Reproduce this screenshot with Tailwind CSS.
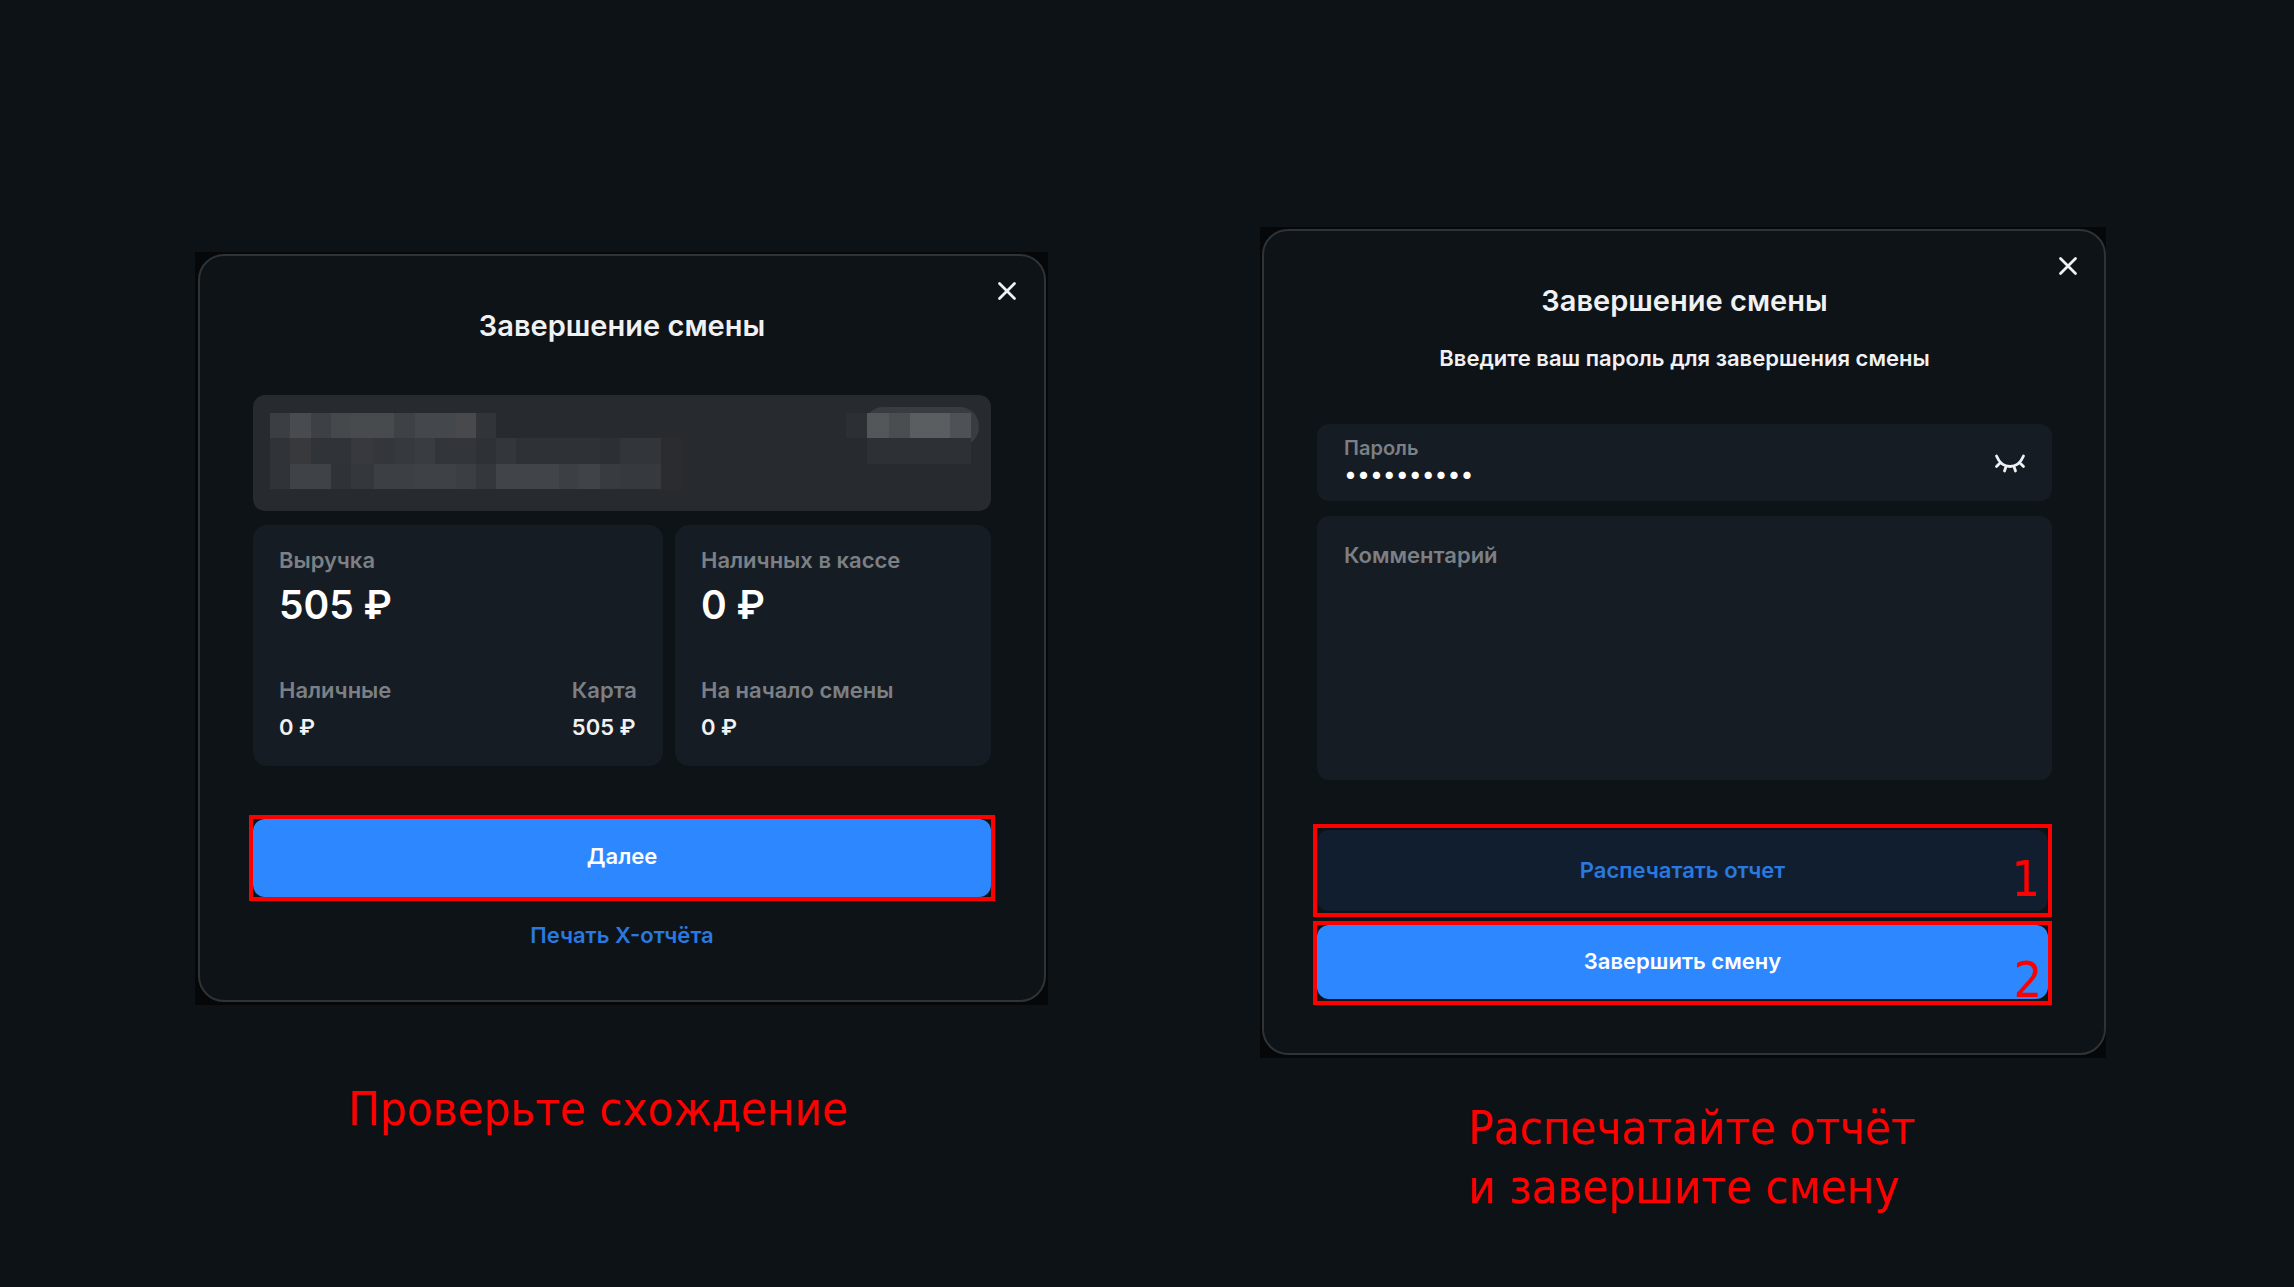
<!DOCTYPE html>
<html lang="ru">
<head>
    <meta charset="UTF-8">
    <meta name="viewport" content="width=device-width, initial-scale=1.0">
    <title>Завершение смены</title>
    <script src="https://cdn.jsdelivr.net/npm/@tailwindcss/browser@4"></script>
</head>
<body class="min-h-screen bg-[#0d1216] font-['Inter',sans-serif] text-[#f0f1f2] antialiased">

    <main class="grid grid-cols-[853fr_846fr] items-start gap-x-[212px] pt-[227px] pr-[188px] pl-[195px]">

        <!-- Step 1: totals -->
        <section class="mt-[25px]">
            <div class="bg-[#050709] pt-[2px] pr-[2px] pb-[3px] pl-[3px]">
                <div class="relative rounded-[26px] border-2 border-[#2f3336] bg-[#0e1317] px-[53px] pt-[52px] pb-[51px]">
                    <button type="button" aria-label="Закрыть" class="absolute top-[21px] right-[23px] p-1">
                        <svg class="size-[20px]" viewBox="0 0 20 20" fill="none" stroke="#f0f1f2" stroke-width="2.8" stroke-linecap="round"><path d="M2.500 2.500l15 15M17.500 2.500l-15 15"/></svg>
                    </button>
                    <h1 class="text-center text-[29px] leading-[36px] font-semibold">Завершение смены</h1>

                    <!-- Hidden employee data -->
                    <div class="mt-[51px] flex h-[116px] items-start justify-between rounded-[12px] bg-[#272a2e] pt-[12px] pr-[12px] pl-[17px]">
                        <svg class="mt-[6px] h-[76px] w-[412px]" viewBox="0 0 412 76" shape-rendering="crispEdges">
                            <path fill="#3b3e42" d="M0 0h20v25H0z"/>
                            <path fill="#484b4f" d="M20 0h21v25H20z"/>
                            <path fill="#3d4044" d="M41 0h20v25H41z"/>
                            <path fill="#46494c" d="M61 0h20v25H61z"/>
                            <path fill="#484b4e" d="M81 0h43v25H81z"/>
                            <path fill="#3e4145" d="M124 0h21v25H124z"/>
                            <path fill="#44474b" d="M145 0h41v25H145z"/>
                            <path fill="#47494d" d="M186 0h20v25H186z"/>
                            <path fill="#313438" d="M206 0h20v25H206z"/>
                            <path fill="#303337" d="M0 25h20v51H0z"/>
                            <path fill="#37393d" d="M20 25h21v26H20z"/>
                            <path fill="#303337" d="M41 25h40v26H41z"/>
                            <path fill="#37393e" d="M81 25h23v26H81z"/>
                            <path fill="#33363a" d="M104 25h20v26H104z"/>
                            <path fill="#36393d" d="M124 25h21v26H124z"/>
                            <path fill="#393c40" d="M145 25h20v26H145z"/>
                            <path fill="#32353a" d="M165 25h41v26H165z"/>
                            <path fill="#2e3135" d="M206 25h20v26H206z"/>
                            <path fill="#33363a" d="M226 25h20v26H226z"/>
                            <path fill="#2e3135" d="M246 25h84v26H246z"/>
                            <path fill="#2c2f33" d="M330 25h20v26H330z"/>
                            <path fill="#323539" d="M350 25h41v26H350z"/>
                            <path fill="#2a2c30" d="M391 25h20v51H391z"/>
                            <path fill="#3f4246" d="M20 51h41v25H20z"/>
                            <path fill="#2f3236" d="M61 51h20v25H61z"/>
                            <path fill="#34373b" d="M81 51h23v25H81z"/>
                            <path fill="#3c3f43" d="M104 51h41v25H104z"/>
                            <path fill="#3e4145" d="M145 51h41v25H145z"/>
                            <path fill="#3b3e42" d="M186 51h20v25H186z"/>
                            <path fill="#34373b" d="M206 51h20v25H206z"/>
                            <path fill="#414448" d="M226 51h63v25H226z"/>
                            <path fill="#3c3f43" d="M289 51h20v25H289z"/>
                            <path fill="#404347" d="M309 51h21v25H309z"/>
                            <path fill="#383b3f" d="M330 51h20v25H330z"/>
                            <path fill="#36393d" d="M350 51h41v25H350z"/>
                        </svg>
                        <svg class="h-[58px] w-[133px]" viewBox="0 0 133 58">
                            <rect x="18" y="0" width="115" height="39" rx="19" fill="#393c40"/>
                            <g shape-rendering="crispEdges">
                                <path fill="#2c2f33" d="M0 6h21v25H0z"/>
                                <path fill="#54575a" d="M21 6h22v25H21z"/>
                                <path fill="#4b4e51" d="M43 6h21v25H43z"/>
                                <path fill="#5b5e61" d="M64 6h40v25H64z"/>
                                <path fill="#4e5155" d="M104 6h21v25H104z"/>
                                <path fill="#2d3034" d="M21 31h104v26H21z"/>
                            </g>
                        </svg>
                    </div>

                    <div class="mt-[14px] grid grid-cols-[410fr_316fr] gap-[12px]">
                        <div class="rounded-[14px] bg-[#161c24] px-[26px] pt-[21px] pb-[25px]">
                            <p class="text-[22px] leading-[28px] font-semibold text-[#7c8085]">Выручка</p>
                            <p class="mt-[7px] text-[39px] leading-[48px] font-semibold text-white">505 ₽</p>
                            <div class="mt-[47px] flex justify-between">
                                <div>
                                    <p class="text-[22px] leading-[28px] font-semibold text-[#7c8085]">Наличные</p>
                                    <p class="mt-[9px] text-[22px] leading-[28px] font-semibold">0 ₽</p>
                                </div>
                                <div>
                                    <p class="text-[22px] leading-[28px] font-semibold text-[#7c8085]">Карта</p>
                                    <p class="mt-[9px] text-[22px] leading-[28px] font-semibold">505 ₽</p>
                                </div>
                            </div>
                        </div>
                        <div class="rounded-[14px] bg-[#161c24] px-[26px] pt-[21px] pb-[25px]">
                            <p class="text-[22px] leading-[28px] font-semibold text-[#7c8085]">Наличных в кассе</p>
                            <p class="mt-[7px] text-[39px] leading-[48px] font-semibold text-white">0 ₽</p>
                            <p class="mt-[47px] text-[22px] leading-[28px] font-semibold text-[#7c8085]">На начало смены</p>
                            <p class="mt-[9px] text-[22px] leading-[28px] font-semibold">0 ₽</p>
                        </div>
                    </div>

                    <div class="-mx-1 mt-[49px] border-4 border-[#ff0000]">
                        <button type="button" class="block h-[78px] w-full rounded-[12px] bg-[#2d88ff] pb-[4px] text-[22px] leading-[28px] font-semibold text-white">Далее</button>
                    </div>
                    <a href="#" class="mt-[20px] block text-center text-[22px] leading-[28px] font-semibold text-[#2a79e0]">Печать X-отчёта</a>
                </div>
            </div>
            <p class="mt-[74px] pl-[153px] font-['DejaVu_Sans_Condensed','DejaVu_Sans',sans-serif] text-[47px] leading-[59px] text-[#ff0000]">Проверьте схождение</p>
        </section>

        <!-- Step 2: password and report -->
        <section>
            <div class="bg-[#050709] pt-[2px] pb-[3px] pl-[2px]">
                <form class="relative rounded-[26px] border-2 border-[#2f3336] bg-[#0e1317] pt-[52px] pr-[52px] pb-[48px] pl-[53px]">
                    <button type="button" aria-label="Закрыть" class="absolute top-[21px] right-[22px] p-1">
                        <svg class="size-[20px]" viewBox="0 0 20 20" fill="none" stroke="#f0f1f2" stroke-width="2.8" stroke-linecap="round"><path d="M2.500 2.500l15 15M17.500 2.500l-15 15"/></svg>
                    </button>
                    <h2 class="text-center text-[29px] leading-[36px] font-semibold">Завершение смены</h2>
                    <p class="mt-[25px] text-center text-[22px] leading-[28px] font-semibold">Введите ваш пароль для завершения смены</p>

                    <div class="mt-[52px] flex h-[77px] items-center justify-between rounded-[12px] bg-[#161c24] pr-[24px] pl-[27px]">
                        <div class="flex flex-col pb-[3px]">
                            <label for="password" class="text-[20px] leading-[26px] font-semibold text-[#7c8085]">Пароль</label>
                            <input id="password" type="password" value="1234567890" class="h-[26px] w-[300px] bg-transparent text-[23px] leading-[26px] text-white outline-none">
                        </div>
                        <button type="button" aria-label="Показать пароль" class="p-[2px]">
                            <svg class="h-[20px] w-[32px]" viewBox="0 0 32 20" fill="none" stroke="#f0f1f2" stroke-width="2.8" stroke-linecap="round"><path d="M2.500 3C5 9 10 13.500 16 13.500s11-4.500 13.500-10.500M6.500 9.500l-4 4M25.500 9.500l4 4M12 13.500l-1.500 4.500M20 13.500l1.500 4.500"/></svg>
                        </button>
                    </div>
                    <textarea aria-label="Комментарий" placeholder="Комментарий" class="mt-[15px] block h-[264px] w-full resize-none rounded-[12px] bg-[#161c24] px-[27px] pt-[25px] text-[22px] leading-[28px] font-semibold outline-none placeholder:text-[#7c8085]"></textarea>

                    <div class="relative mt-[44px] -ml-1 border-4 border-[#ff0000] py-[2px]">
                        <button type="button" class="block h-[81px] w-full rounded-[12px] bg-[#111e2f] pb-[2px] text-[22px] leading-[28px] font-semibold text-[#2a79e0]">Распечатать отчет</button>
                        <span class="absolute right-[8px] bottom-[4px] font-['DejaVu_Sans_Condensed','DejaVu_Sans',sans-serif] text-[50px] leading-[60px] text-[#ff0000]">1</span>
                    </div>
                    <div class="relative mt-[4px] -ml-1 border-4 border-[#ff0000] pb-[2px]">
                        <button type="submit" class="block h-[74px] w-full rounded-[12px] bg-[#2d88ff] pb-[2px] text-[22px] leading-[28px] font-semibold text-white">Завершить смену</button>
                        <span class="absolute right-[6px] -bottom-[9px] font-['DejaVu_Sans_Condensed','DejaVu_Sans',sans-serif] text-[50px] leading-[60px] text-[#ff0000]">2</span>
                    </div>
                </form>
            </div>
            <p class="mt-[40px] pl-[208px] font-['DejaVu_Sans_Condensed','DejaVu_Sans',sans-serif] text-[47px] leading-[59px] text-[#ff0000]">Распечатайте отчёт<br>и завершите смену</p>
        </section>

    </main>

</body>
</html>
